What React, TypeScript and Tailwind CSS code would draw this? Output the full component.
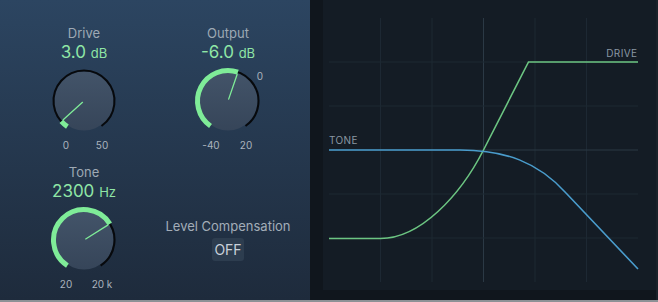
import * as React from 'react'

const FONT = { fontFamily: 'Inter, "Noto Sans", "Liberation Sans", sans-serif' }

const GREEN = '#7fec98'

function polar(cx: number, cy: number, r: number, deg: number): [number, number] {
  const rad = (deg * Math.PI) / 180
  return [cx + r * Math.sin(rad), cy - r * Math.cos(rad)]
}

function arc(cx: number, cy: number, r: number, from: number, to: number) {
  const [x0, y0] = polar(cx, cy, r, from)
  const [x1, y1] = polar(cx, cy, r, to)
  const large = to - from > 180 ? 1 : 0
  return `M${x0.toFixed(2)},${y0.toFixed(2)} A${r},${r} 0 ${large} 1 ${x1.toFixed(2)},${y1.toFixed(2)}`
}

interface Tick {
  text: string
  x: number
  y: number
}

interface KnobProps {
  id: string
  angle: number
  range: number
  ticks: Tick[]
  // drive only shows a stub of green at the start
  fillFrom?: number
}

function Knob({ id, angle, range, ticks, fillFrom }: KnobProps) {
  const cx = 50
  const cy = 38
  const start = -range
  const [px0, py0] = polar(cx, cy, 2, angle)
  const [px1, py1] = polar(cx, cy, 28, angle)

  return (
    <svg width={100} height={90} viewBox="0 0 100 90" className="block">
      <defs>
        <linearGradient id={`body-${id}`} x1="0" y1="0" x2="0" y2="1">
          <stop offset="0" stopColor="#435469" />
          <stop offset="1" stopColor="#364559" />
        </linearGradient>
      </defs>
      <circle cx={cx} cy={cy} r={29.5} fill={`url(#body-${id})`} />
      <path d={arc(cx, cy, 30.5, start, range)} fill="none" stroke="#07090c" strokeWidth={2} />
      <path
        d={arc(cx, cy, 30.5, fillFrom ?? start, angle)}
        fill="none"
        stroke={GREEN}
        strokeWidth={5}
      />
      <line x1={px0} y1={py0} x2={px1} y2={py1} stroke={GREEN} strokeWidth={1.3} strokeLinecap="round" />
      {ticks.map((tick) => (
        <text
          key={tick.text + tick.x}
          x={tick.x}
          y={tick.y}
          textAnchor="middle"
          fontSize={10}
          fill="#aab3bd"
          style={FONT}
        >
          {tick.text}
        </text>
      ))}
    </svg>
  )
}

interface KnobUnitProps {
  label: string
  value: string
  unit: string
  children: React.ReactNode
}

function KnobUnit({ label, value, unit, children }: KnobUnitProps) {
  return (
    <div className="flex flex-col items-center">
      <p className="text-[13px] leading-4 text-[#9ea9b4]">{label}</p>
      <p className="mt-px text-[17px] leading-5 text-[#8fe6a6]">
        {value} <span className="text-[13px]">{unit}</span>
      </p>
      {children}
    </div>
  )
}

function Graph() {
  const cols = [70.5, 122, 225, 276.5]
  const rows = [62, 106, 194, 238]

  return (
    <svg width={348} height={300} viewBox="0 0 348 300" className="block">
      <rect x={0} y={0} width={348} height={300} fill="#10161d" />
      <rect x={13} y={0} width={333} height={290} fill="#141c25" />
      <rect x={346} y={0} width={2} height={300} fill="#1a222a" />
      {cols.map((x) => (
        <line key={x} x1={x} y1={18} x2={x} y2={282} stroke="#1d2833" strokeWidth={1} />
      ))}
      <line x1={173.5} y1={18} x2={173.5} y2={282} stroke="#2b3945" strokeWidth={1} />
      {rows.map((y) => (
        <line key={y} x1={19} y1={y} x2={328} y2={y} stroke="#1d2833" strokeWidth={1} />
      ))}
      <line x1={19} y1={150} x2={328} y2={150} stroke="#2b3945" strokeWidth={1} />

      <path
        d="M19,238.5 L70.5,238.5 C110,238.5 150,196 173.5,150 L218.5,62 L328,62"
        fill="none"
        stroke="#6cc582"
        strokeWidth={1.6}
      />
      <path
        d="M19,150 L150,150 C195,150 228,162 256,193 L328,269"
        fill="none"
        stroke="#4a9ccc"
        strokeWidth={1.6}
      />

      <text x={327.5} y={57} textAnchor="end" fontSize={10} letterSpacing={0.4} fill="#8a97a3" style={FONT}>
        DRIVE
      </text>
      <text x={19} y={144} fontSize={10} letterSpacing={0.4} fill="#8a97a3" style={FONT}>
        TONE
      </text>
    </svg>
  )
}

export default function App() {
  return (
    <div className="flex h-[302px] w-[658px] flex-col overflow-hidden" style={FONT}>
      <div className="flex h-[300px]">
        <div className="w-[310px] bg-gradient-to-b from-[#2c4561] to-[#1e2b3c] pl-3 pt-[25px]">
          <div className="grid grid-cols-[144px_144px]">
            <KnobUnit label="Drive" value="3.0" unit="dB">
              <Knob
                id="drive"
                angle={-132}
                range={145}
                fillFrom={-147}
                ticks={[
                  { text: '0', x: 32, y: 86 },
                  { text: '50', x: 68, y: 86 },
                ]}
              />
            </KnobUnit>
            <KnobUnit label="Output" value="-6.0" unit="dB">
              <Knob
                id="output"
                angle={19}
                range={145}
                ticks={[
                  { text: '0', x: 82, y: 17 },
                  { text: '-40', x: 33, y: 86 },
                  { text: '20', x: 68, y: 86 },
                ]}
              />
            </KnobUnit>
          </div>

          <div className="mt-[11px] grid grid-cols-[144px_144px]">
            <KnobUnit label="Tone" value="2300" unit="Hz">
              <Knob
                id="tone"
                angle={58}
                range={147}
                ticks={[
                  { text: '20', x: 32, y: 86 },
                  { text: '20 k', x: 68, y: 86 },
                ]}
              />
            </KnobUnit>
            <div className="flex flex-col items-center pt-[54px]">
              <p className="text-[13px] leading-4 text-[#a3adb8]">Level Compensation</p>
              <button className="mt-1 flex h-[23px] w-8 items-center justify-center rounded-[3px] bg-[#2d3d4f] text-[14px] text-[#c9d1d9]">
                OFF
              </button>
            </div>
          </div>
        </div>

        <div className="flex-1">
          <Graph />
        </div>
      </div>
      <div className="h-[2px] bg-[#8d9196]" />
    </div>
  )
}
